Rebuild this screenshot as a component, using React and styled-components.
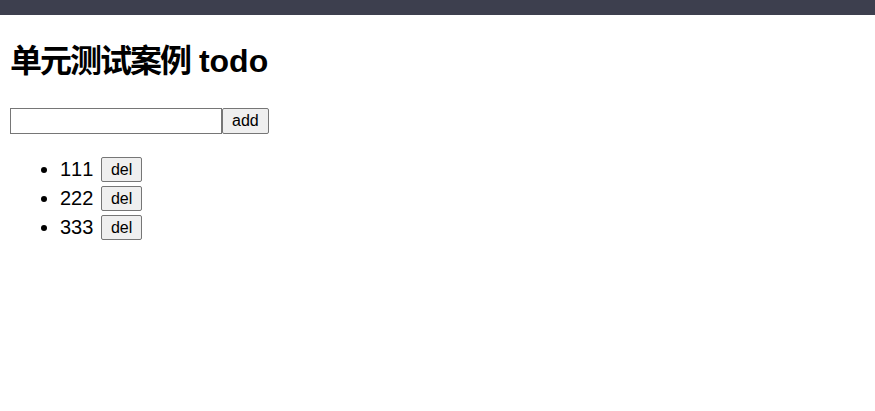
import React, { useState } from "react";
import styled, { createGlobalStyle } from "styled-components";

const Global = createGlobalStyle`
  html, body { margin: 0; padding: 0; background: #fff; }
  body { font-family: "Liberation Sans", Arial, "Noto Sans CJK SC", sans-serif; color: #000; font-kerning: none; }
`;

const TopBar = styled.div`
  height: 15px;
  background: #3d3f4e;
`;

const Main = styled.main`
  padding: 0 10px;
`;

const Title = styled.h1`
  margin: 23px 0 0;
  height: 40px;
  line-height: 40px;
  font-size: 32px;
  font-weight: bold;
  font-family: "Liberation Sans", "Noto Sans CJK SC", sans-serif;
`;

const Cjk = styled.span`
  font-family: "Noto Sans CJK SC", sans-serif;
  letter-spacing: -2px;
`;

const Form = styled.div`
  display: flex;
  margin-top: 30px;
`;

const TextInput = styled.input`
  box-sizing: border-box;
  width: 212px;
  height: 26px;
  margin: 0;
  padding: 1px 2px;
  border: 1px solid #767676;
  font-size: 16px;
  font-family: "Liberation Sans", sans-serif;
`;

const Button = styled.button`
  box-sizing: border-box;
  height: ${(p) => p.$h || 26}px;
  padding: 0 ${(p) => p.$px || 9}px;
  margin: 0;
  font-size: 16px;
  font-family: "Liberation Sans", Arial, sans-serif;
  color: #000;
  background: #efefef;
  border: 1px solid #767676;
  border-radius: 2px;
  line-height: 1;
`;

const List = styled.ul`
  margin: 21px 0 0;
  padding-left: 50px;
  list-style: disc;
`;

const Item = styled.li`
  height: 29px;
  font-size: 20px;
  line-height: 29px;
`;

const Row = styled.div`
  display: flex;
  align-items: center;
  gap: 8px;
  height: 29px;
`;

export default function App() {
  const [items, setItems] = useState(["111", "222", "333"]);
  const [value, setValue] = useState("");
  return (
    <>
      <Global />
      <TopBar />
      <Main>
        <Title>
          <Cjk>单元测试案例</Cjk> todo
        </Title>
        <Form>
          <TextInput value={value} onChange={(e) => setValue(e.target.value)} />
          <Button
            $px={9}
            onClick={() => {
              if (value) setItems([...items, value]);
              setValue("");
            }}
          >
            add
          </Button>
        </Form>
        <List>
          {items.map((it, i) => (
            <Item key={i}>
              <Row>
                <span>{it}</span>
                <Button $h={25} $px={8.5} onClick={() => setItems(items.filter((_, j) => j !== i))}>
                  del
                </Button>
              </Row>
            </Item>
          ))}
        </List>
      </Main>
    </>
  );
}
